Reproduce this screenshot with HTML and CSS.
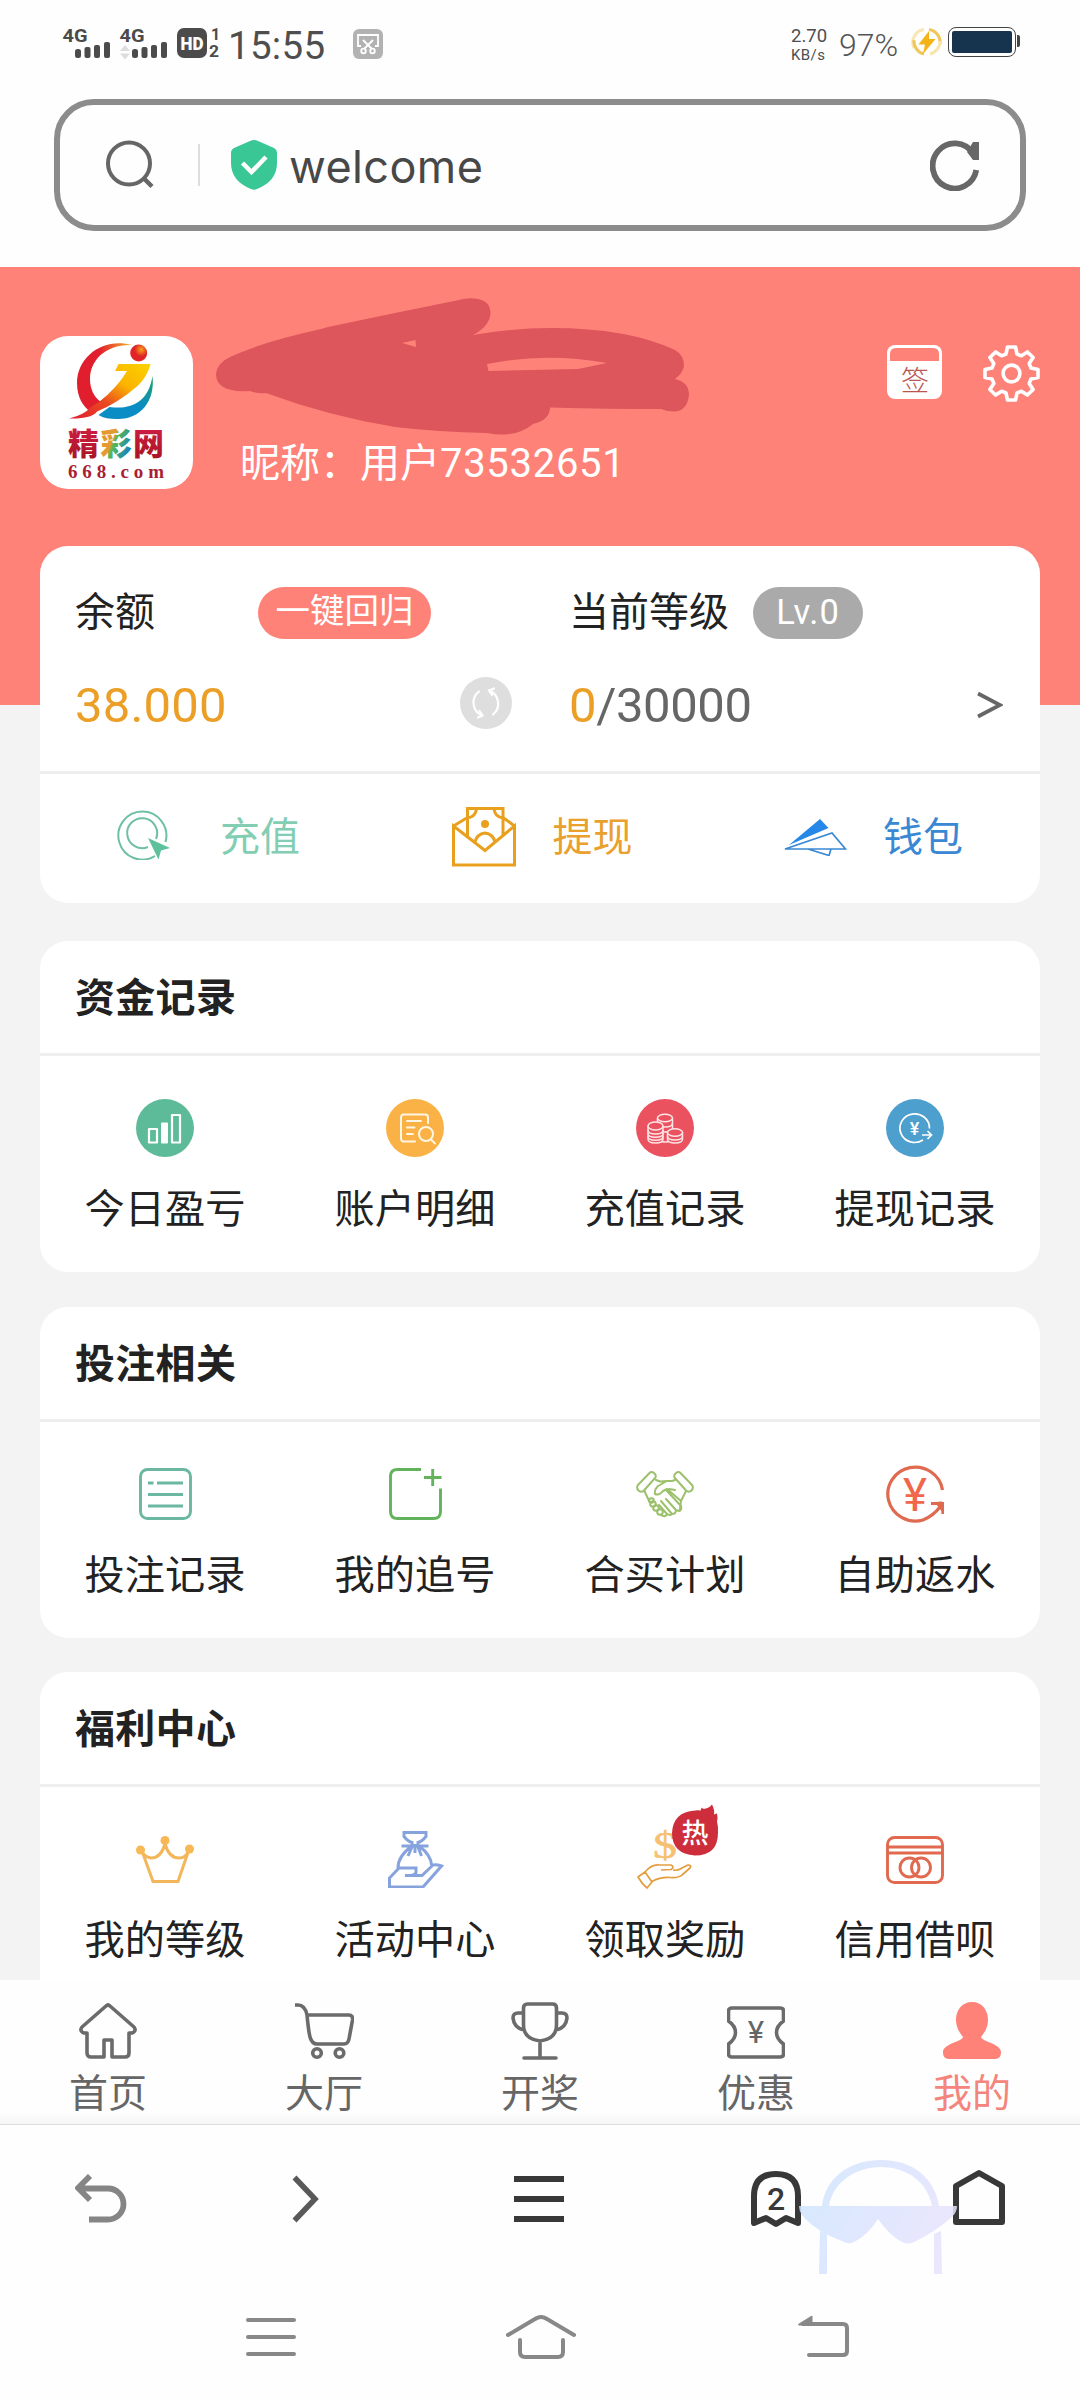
FILE: index.html
```html
<!DOCTYPE html>
<html lang="zh-CN">
<head>
<meta charset="utf-8">
<title>我的</title>
<link rel="stylesheet" href="styles.css">
</head>
<body>
<header class="status">
  <svg class="signals" viewBox="60 24 162 38" width="162" height="38">
    <g fill="#4b4b4b">
      <g class="net"><text x="62.500" y="42" textLength="25" lengthAdjust="spacingAndGlyphs">4G</text><text x="119.500" y="42" textLength="25" lengthAdjust="spacingAndGlyphs">4G</text></g>
      <rect x="75" y="49" width="6" height="9" rx="2.500"/><rect x="84.500" y="47" width="6" height="11" rx="2"/><rect x="94" y="45" width="6" height="13" rx="2"/><rect x="104" y="42" width="6" height="16" rx="2"/>
      <rect x="132" y="49" width="6" height="9" rx="2.500"/><rect x="141.500" y="47" width="6" height="11" rx="2"/><rect x="151" y="45" width="6" height="13" rx="2"/><rect x="161" y="42" width="6" height="16" rx="2"/>
      <rect x="177" y="28" width="30" height="30" rx="7"/>
      <g class="sim"><text x="211" y="40">1</text><text x="209" y="57" textLength="10" lengthAdjust="spacingAndGlyphs">2</text></g>
    </g>
    <path d="M120 51l5-6 5 6zM120 53.500l5 6 5-6z" fill="#ddd"/>
    <text class="hd" x="180.500" y="50" textLength="23" lengthAdjust="spacingAndGlyphs">HD</text>
  </svg>
  <span class="clock">15:55</span>
  <svg class="snip" viewBox="0 0 30 30" width="30" height="30">
    <rect width="30" height="30" rx="6" fill="#b2b2b2"/>
    <g fill="none" stroke="#fff" stroke-width="1.800"><path d="M8 17H5V6h20v11h-3M10 11l9 9M20 11l-9 9"/><circle cx="10.500" cy="22" r="2.300"/><circle cx="19.500" cy="22" r="2.300"/></g>
  </svg>
  <div class="speed"><span>2.70</span><span>KB/s</span></div>
  <span class="percent">97%</span>
  <svg class="charge" viewBox="0 0 32 30" width="32" height="30">
    <g fill="none" stroke-width="3"><path d="M13 2.500A13 13 0 0 0 3 21" stroke="#f8e7b4"/><path d="M3 13a13 13 0 0 0 10 14" stroke="#efc75a"/><path d="M18 2.500A13 13 0 0 1 29 17" stroke="#f0c65b"/><path d="M29 14a13 13 0 0 1-10 13" stroke="#f8e5ae"/></g>
    <path d="M18 4L7.500 17.500h6.500L12 27l12.500-15H18z" fill="#f5b317"/>
  </svg>
  <div class="battery"><i></i></div>
</header>

<div class="address">
  <svg viewBox="0 0 48 50" width="48" height="50" fill="none" stroke="#666" stroke-width="4"><circle cx="23" cy="23.500" r="21"/><path d="M37.500 38l8.500 8.500" stroke-width="4.500"/></svg>
  <i class="sep"></i>
  <svg viewBox="0 0 46 50" width="46" height="50"><path d="M23 0q2 0 4 1l16 7q3 1.500 3 5v10q0 18-20 26-3 1.300-6 0Q0 41 0 23V13q0-3.500 3-5l16-7q2-1 4-1z" fill="#38c795"/><path d="M11.500 23l9 9L35 17" fill="none" stroke="#fff" stroke-width="4.500"/></svg>
  <span class="url">welcome</span>
  <svg class="reload" viewBox="0 0 50 51" width="50" height="51"><path d="M43 13.500A22 22.500 0 1 0 46.300 30" fill="none" stroke="#676767" stroke-width="5.800"/><path d="M43 2h6v18h-6l-6-8z" fill="#676767"/></svg>
</div>

<main class="page">
  <section class="profile">
    <svg class="avatar" viewBox="40 336 153 153" width="153" height="153">
      <defs>
        <linearGradient id="seven" x1="1" y1="0" x2="0" y2="1"><stop offset="0" stop-color="#fbd200"/><stop offset=".35" stop-color="#fbb400"/><stop offset=".62" stop-color="#ea4a20"/><stop offset="1" stop-color="#e01e30"/></linearGradient>
        <linearGradient id="arc" x1="1" y1="0" x2="0" y2="0"><stop offset="0" stop-color="#f6b52a"/><stop offset=".6" stop-color="#e01e2d"/></linearGradient>
        <linearGradient id="sea" x1="1" y1="0" x2=".6" y2="1"><stop offset="0" stop-color="#1da36a"/><stop offset=".7" stop-color="#0a8cc4"/></linearGradient>
        <radialGradient id="head" cx=".65" cy=".3"><stop offset="0" stop-color="#f6a11c"/><stop offset=".8" stop-color="#df2327"/></radialGradient>
        <linearGradient id="name" x1="0" y1="0" x2="0" y2="1"><stop offset="0" stop-color="#d91f4c"/><stop offset="1" stop-color="#a31420"/></linearGradient>
        <linearGradient id="cai" x1="0" y1="0" x2="1" y2=".6"><stop offset=".5" stop-color="#e39a32"/><stop offset=".56" stop-color="#5cb84f"/><stop offset="1" stop-color="#1784c0"/></linearGradient>
      </defs>
      <rect x="40" y="336" width="153" height="153" rx="28" fill="#fff"/>
      <path d="M132 345C104 337 77 356 77 383 77 397 83 407 91 412L101 402C94 397 90 389 90 379 90 360 106 344 132 345z" fill="url(#arc)"/>
      <path d="M118.500 364H150.600Q147 377 138 385.500 118 403 97 411.500 92 419 69 418.500 84 415 91 407L99 402Q117 388 127 371H115z" fill="url(#seven)"/>
      <circle cx="138.700" cy="353" r="8.500" fill="url(#head)"/>
      <path d="M152.500 376c3 26-13 44-36 43-7 0-13-1-18-4l11-8c22 3 39-5 43-31z" fill="url(#sea)"/>
      <g class="brand"><text x="68" y="454.500" fill="url(#name)">精</text><text x="100.500" y="454.500" fill="url(#cai)">彩</text><text x="133" y="454.500" fill="url(#name)">网</text></g>
      <text class="domain" x="68" y="477.500" textLength="96">668.com</text>
    </svg>
    <p class="nick">昵称：用户<span>73532651</span></p>
    <svg class="scribble" viewBox="210 295 485 145" width="485" height="145"><path fill="#dc565b" fill-rule="evenodd" d="M216 374Q217 363 230 357Q262 342 321 329L328 327L395 313L459 300Q468 297 478 299Q490 301 490.500 313Q490 326 473 335Q512 328 551 328Q628 328 675 350Q684 355 684 366Q683 373 675 379Q689 382 689 395Q687 412 673 411.500Q666 411 661 409Q610 409 550 407.500Q550 420 533 424Q521 434 505 434.500Q497 435 487 433Q438 432 395 427Q328 416 266 393Q258 394 250 391Q216 393 216 374ZM402 343L415.500 340 416 347ZM487 364Q545 352 607 363L578 369 488.500 371Z"/></svg>
    <div class="tools">
      <svg viewBox="0 0 55 54" width="55" height="54"><rect width="55" height="54" rx="8" fill="#fff"/><path d="M3 16V9q0-6 6-6h37q6 0 6 6v7z" fill="#ff8279"/><text class="sign" x="14" y="46">签</text></svg>
      <svg viewBox="-28.500 -28.500 57 57" width="57" height="57" fill="none" stroke="#fff" stroke-width="3.600" stroke-linejoin="round"><path d="M-5.500-19.500L-4-26.500H4L5.500-19.500 9.900-17.700 15.900-21.600 21.600-15.900 17.700-9.900 19.500-5.500 26.500-4V4L19.500 5.500 17.700 9.900 21.600 15.900 15.900 21.600 9.900 17.700 5.500 19.500 4 26.500H-4L-5.500 19.500-9.900 17.700-15.900 21.600-21.600 15.900-17.700 9.900-19.500 5.500-26.500 4V-4L-19.500-5.500-17.700-9.900-21.600-15.900-15.900-21.600-9.900-17.700z"/><circle r="8.400"/></svg>
    </div>
  </section>

  <section class="card wallet">
    <div class="summary">
      <div class="half balance">
        <div class="line"><span class="label">余额</span><span class="pill back">一键回归</span></div>
        <div class="line second"><span class="num gold">38.000</span>
          <svg class="refresh" viewBox="0 0 52 52" width="52" height="52"><circle cx="26" cy="26" r="26" fill="#dedede"/><g fill="none" stroke="#fff" stroke-width="2.200" stroke-linecap="round"><path d="M19 14.500A14 14 0 0 0 22 38.500M18 40.500l4.500-2-3-4.500M33 37.500A14 14 0 0 0 29 13.500M34 11.500l-5 2 3 4.500"/></g></svg>
        </div>
      </div>
      <div class="half level">
        <div class="line"><span class="label">当前等级</span><span class="pill lv">Lv.0</span></div>
        <div class="line second"><span class="num"><b>0</b>/30000</span><svg class="more" viewBox="0 0 26 28" width="26" height="28" fill="none" stroke="#666" stroke-width="3.800"><path d="M1 2.500L23 14 1 25.500"/></svg></div>
      </div>
    </div>
    <div class="actions">
      <a class="green"><svg viewBox="0 0 54 51" width="54" height="51"><g fill="none" stroke="#6fbfa5" stroke-width="2"><path d="M48.500 33A24 24 0 1 0 38 47"/><path d="M39 30A15 15 0 1 0 31 38"/></g><path d="M31 29l22 10-9 2.500-2.500 9z" fill="#5fc09c"/></svg><span>充值</span></a>
      <a class="amber"><svg viewBox="0 0 64 60" width="64" height="60" fill="none" stroke="#e9a01f" stroke-width="3"><path d="M1.500 19L33 43.500 62.500 19V58H1.500zL15.500 10.500M51 10.500L62.500 19M15.500 29V1.500H51V29M15.500 11q8-1 9-9M51 11q-8-1-9-9M23 35q2-8 10-9 8 1 10 9"/><circle cx="33" cy="17" r="4" fill="#e9a01f" stroke="none"/></svg><span>提现</span></a>
      <a class="blue"><svg viewBox="0 0 63 38" width="63" height="38"><path d="M36 1l8.500 9L5 27z" fill="#2587e8"/><path d="M1 31l47-16 13.500 16zM24 31l21 6.500 2-6.500" fill="none" stroke="#3a88d4" stroke-width="1.700"/></svg><span>钱包</span></a>
    </div>
  </section>

  <section class="card group">
    <h2>资金记录</h2>
    <div class="grid">
      <a><svg viewBox="0 0 58 58" width="58" height="58"><circle cx="29" cy="29" r="29" fill="#5dbb99"/><g fill="none" stroke="#fff" stroke-width="2.200" stroke-linejoin="round"><rect x="13" y="30" width="8" height="13.500"/><rect x="36" y="16" width="8" height="27.500"/></g><rect x="25" y="23.500" width="7" height="21" rx="1" fill="#fff"/></svg>今日盈亏</a>
      <a><svg viewBox="0 0 58 58" width="58" height="58"><circle cx="29" cy="29" r="29" fill="#fab146"/><g fill="none" stroke="#fff6e4" stroke-width="2" stroke-linecap="round"><path d="M29 42.500H18q-3 0-3-3V18.500q0-3 3-3h21q3 0 3 3V24M21 22h14M21 28.500h7.500M21 35h6"/><circle cx="40" cy="35" r="7"/><path d="M45 40.500l4 4"/></g></svg>账户明细</a>
      <a><svg viewBox="0 0 58 58" width="58" height="58"><circle cx="29" cy="29" r="29" fill="#ea525f"/><g fill="#ea525f" stroke="#ffe5e7" stroke-width="1.500"><path d="M21.500 19v20q0 4 7.500 4t7.500-4V19"/><path d="M21.500 24q0 4 7.500 4t7.500-4m-15 5q0 4 7.500 4t7.500-4" fill="none"/><ellipse cx="29" cy="19" rx="7.500" ry="3.800"/><path d="M12 27v13q0 4 7.500 4t7.500-4V27"/><path d="M12 31q0 4 7.500 4t7.500-4m-15 3.200q0 4 7.500 4t7.500-4M12 37.300q0 4 7.500 4t7.500-4" fill="none"/><ellipse cx="19.500" cy="27" rx="7.500" ry="4"/><path d="M31.500 33v7q0 4 7.500 4t7.500-4v-7"/><path d="M31.500 37q0 4 7.500 4t7.500-4" fill="none"/><ellipse cx="39" cy="33.500" rx="7.500" ry="3.800"/></g></svg>充值记录</a>
      <a><svg viewBox="0 0 58 58" width="58" height="58"><circle cx="29" cy="29" r="29" fill="#4d9fcd"/><g fill="none" stroke="#fff" stroke-width="1.700"><path d="M43.500 29.500A14.800 14.300 0 1 0 37 41M36 36h9.500M41.500 32l4 4-4 4"/></g><text class="yen" x="28.500" y="35.500" font-size="18">¥</text></svg>提现记录</a>
    </div>
  </section>

  <section class="card group">
    <h2>投注相关</h2>
    <div class="grid">
      <a><svg viewBox="0 0 58 58" width="58" height="58" fill="none" stroke="#6cb7a1" stroke-width="2.900"><rect x="4.500" y="4.500" width="50" height="49" rx="7"/><path d="M12 18h5.500M21 18h26M12 29.500h35M12 41h35"/></svg>投注记录</a>
      <a><svg viewBox="0 0 58 58" width="58" height="58" fill="none" stroke="#63b35c" stroke-width="2.900"><path d="M35 4.500H11.500q-7 0-7 7v35q0 7 7 7h36q7 0 7-7V23.500M38 12.500h17.500M46.700 4v17"/></svg>我的追号</a>
      <a><svg viewBox="0 0 58 58" width="58" height="58" fill="none" stroke="#9cc06b" stroke-width="2" stroke-linejoin="round" stroke-linecap="round"><path d="M1.500 20.500L13.500 8q2-2 4.500 0t1.500 4.500L7.500 26q-3 1.500-5-.5t-1-5zM56.500 20.500L44.500 8q-2-2-4.500 0t-1.500 4.500L50.500 26q3 1.500 5-.5t1-5zM20 15l4 1.500 7-.5h5l3-1M8.500 26l5 11M50 26l-5 10-1 8M31 16l-9 5q-4 4-3 8 4 2 8-3l4-2 14 12M33 24l6 1M31 26l14 15q1 4-2 5l-3-1-10-11M40 45q0 4-4 4L25 36M36 49q-2 2-5 0l-8-9M31 49q-2 4-6 1"/><circle cx="17" cy="39" r="2.800"/><circle cx="20" cy="43" r="2.800"/><circle cx="24" cy="47" r="2.800"/><circle cx="15.500" cy="35.500" r="2.300"/></svg>合买计划</a>
      <a><svg viewBox="0 0 58 58" width="58" height="58" fill="none" stroke="#df6a4f" stroke-width="3.200"><path d="M56.500 25A27.500 27 0 1 0 37 55Q47 51 54 42M45 38.500h12V49M46 38.500q9 0 10.500-1"/><path d="M57 37v11l-4-5-3-4z" fill="#df6a4f" stroke="none"/><text class="yen rebate" x="29" y="45.500" font-size="46" textLength="24" lengthAdjust="spacingAndGlyphs">¥</text></svg>自助返水</a>
    </div>
  </section>

  <section class="card group">
    <h2>福利中心</h2>
    <div class="grid">
      <a><svg viewBox="0 0 58 58" width="58" height="58"><path d="M6 21l11 30.500h25L52.500 21Q50 28 43 28q-10 0-14-14-4 14-14 14Q8 27 6 21z" fill="none" stroke="#f3b65b" stroke-width="3"/><g fill="#f8b856"><circle cx="4.500" cy="20" r="4.500"/><circle cx="29" cy="10.500" r="4.500"/><circle cx="53.500" cy="19" r="4.500"/></g></svg>我的等级</a>
      <a><svg viewBox="0 0 58 58" width="58" height="58" fill="none" stroke="#86a3de" stroke-width="3"><path d="M18 2.500h22v4q-4 5-8 6v3h-6v-3q-4-1-8-6zM15.500 16h27M26 16q-14 10-14 22M33 16q12 9 12.500 19M26 17l-4 9M32 17l3.500 9M29 17v6M13 38h17v4q0 4-11 3.500h17L47 35q3-1 8.500 1L37 57H3.500V48z"/></svg>活动中心</a>
      <a class="hot"><svg class="gift" viewBox="0 0 58 58" width="58" height="58"><text class="dollar" x="17" y="28" textLength="24" lengthAdjust="spacingAndGlyphs">$</text><path d="M2 47L9 42l7 10-5 6q-5-4-9-11zM9 42q7-8 14-7h12q4 2 0 4.500l-10 .5M37 40q5 1 9-2l6-3q4 0 2 3l-8 7q-3 3-12 2.500-10-.5-18 4" fill="none" stroke="#e39d3d" stroke-width="1.700" stroke-linejoin="round"/></svg>
        <svg class="flame" viewBox="0 0 48 52" width="48" height="52"><path d="M24 5.500q3-.5 6 0-1-1 1-3 0 2 4 1 4-1 6-4 3 6 2 10 2-1 3-1 1 4 0 8 1.500 6 1 11Q47 50.500 24 50.500 1 49 1 28 2 7 24 5.500z" fill="#ce2e3b"/><text x="24" y="38">热</text></svg>领取奖励</a>
      <a><svg viewBox="0 0 58 58" width="58" height="58" fill="none" stroke="#e0694f" stroke-width="2.900"><rect x="1.500" y="7.500" width="55" height="45" rx="7"/><path d="M1 17h56M1 23h56"/><circle cx="23.500" cy="37.500" r="9.500"/><circle cx="35" cy="37.500" r="9.500"/></svg>信用借呗</a>
    </div>
  </section>
</main>

<nav class="tabs">
  <a><svg viewBox="0 0 58 58" width="58" height="58"><path d="M27 4q2-2 4 0L55 25q3 4-2 6H50V51q0 4-4 4H33V38H25V55H12q-4 0-4-4V31H5q-5-2-2-6z"/></svg>首页</a>
  <a><svg viewBox="0 0 60 58" width="60" height="58"><path d="M1 3h3c6 0 8 5 9 10H55q4 0 3.500 5L55 37q-1 5-5 5H23c-7 0-8-8-10-29"/><circle cx="23" cy="51" r="4.300"/><circle cx="45.500" cy="51" r="4.300"/></svg>大厅</a>
  <a><svg viewBox="0 0 58 58" width="58" height="58"><path d="M12.500 6q0-4 4-4h25q4 0 4 4v17q0 14-16.500 16Q12.500 37 12.500 23zM12 11H7q-5 0-5 5 1 10 11 12M46 11h5q5 0 5 5-1 10-11 12M29 39V56M13 56H45" stroke-linecap="round"/></svg>开奖</a>
  <a><svg viewBox="0 0 58 58" width="58" height="58"><path d="M5 6h48q3.500 0 3.500 3v10q-7 5-7 11.500t7 11.500V52q0 3-3.500 3H5q-3.500 0-3.500-3V42q7-5 7-11.500T1.500 19V9Q1.500 6 5 6z"/><text class="yen coupon" x="29" y="40.500" font-size="31">¥</text></svg>优惠</a>
  <a class="on"><svg class="person" viewBox="0 0 58 58" width="58" height="58"><path d="M29 0c10 0 16 8 16 18 0 7-3 12-7 17 0 4 20 7 20 15 0 6-3 7-7 7H7c-4 0-7-1-7-7 0-8 20-11 20-15-4-5-7-10-7-17C13 8 19 0 29 0z"/></svg>我的</a>
</nav>

<nav class="browser">
  <svg viewBox="0 0 54 50" width="54" height="50" fill="none" stroke="#858585" stroke-width="5.800"><path d="M15 2L3 14l12 12M3 14.500H33a15.200 15.200 0 0 1 0 31H14"/></svg>
  <svg viewBox="0 0 28 48" width="28" height="48" fill="none" stroke="#595959" stroke-width="5.500"><path d="M2.500 2.500L23 24 2.500 45.500"/></svg>
  <svg viewBox="0 0 50 46" width="50" height="46"><path d="M0 0h50v6H0zM0 20h50v6H0zM0 40h50v6H0z" fill="#383838"/></svg>
  <svg viewBox="0 0 52 58" width="52" height="58"><path d="M4 53V26Q4 4 26 4t22 22V53l-12-5-10 6-10-6z" fill="none" stroke="#383838" stroke-width="6" stroke-linejoin="round"/><text class="count" x="26" y="40">2</text></svg>
  <svg viewBox="0 0 52 57" width="52" height="57"><path d="M3 17L26 4l23 13V53H3z" fill="none" stroke="#383838" stroke-width="6" stroke-linejoin="round"/></svg>
  <svg class="glasses" viewBox="799 2160 158 114" width="158" height="114"><defs><linearGradient id="lens" x1="799" y1="2180" x2="957" y2="2250" gradientUnits="userSpaceOnUse"><stop offset="0" stop-color="#cfe6ff"/><stop offset="1" stop-color="#e9e2fd"/></linearGradient></defs><g fill="url(#lens)"><path d="M799 2206H957Q957 2212 952 2217Q935 2232 914 2242Q908 2245 902 2242Q889 2235 878 2219Q867 2236 854 2242Q848 2245 842 2241Q815 2231 802 2215Q799 2211 799 2206Z"/><path d="M820 2231l7 3v40h-8zM934 2234l7-3 1 43h-8z"/><path d="M822 2206C825 2180 847 2160 881 2160S935 2180 939 2206H932C928 2182 906 2167 881 2167S833 2182 829 2206Z"/></g></svg>
</nav>

<nav class="system">
  <svg viewBox="0 0 50 40" width="50" height="40"><path d="M2 3h46M2 20h46M2 37h46"/></svg>
  <svg viewBox="0 0 70 44" width="70" height="44"><path d="M2 20L29 4q6-4 12 0L68 20M14 25V37q0 5 5 5H52q5 0 5-5V25"/></svg>
  <svg viewBox="0 0 52 42" width="52" height="42"><path d="M5 9H45q4 0 4 4V36q0 4-4 4H11"/><path d="M1 9L14 1v9H1z" fill="#888" stroke-width="1"/></svg>
</nav>
</body>
</html>
```
FILE: styles.css
```css
* { box-sizing: border-box; }
body {
  margin: 0;
  width: 1080px;
  height: 2400px;
  overflow: hidden;
  display: flex;
  flex-direction: column;
  background: #fefefe;
  color: #222;
  font-family: Roboto, "Noto Sans CJK SC", sans-serif;
}
svg { display: block; flex: none; }

/* status bar */
.status { height: 99px; display: flex; align-items: flex-start; padding: 24px 60px 0; color: #4e4e4e; }
.net { font: 700 19px Roboto, sans-serif; }
.sim { font: 700 16px Roboto, sans-serif; }
.hd { font: 900 18px Roboto, sans-serif; fill: #fff; }
.clock { font-size: 38.5px; line-height: 43px; margin-left: 6px; width: 125px; letter-spacing: .3px; }
.snip { margin-top: 5px; }
.speed { display: flex; flex-direction: column; margin: 1px 1px 0 auto; width: 38px; font-size: 18.5px; line-height: 22px; white-space: nowrap; }
.speed span:last-child { font-size: 15px; line-height: 16px; letter-spacing: .4px; }
.percent { width: 63px; margin-left: 9px; font-size: 32px; line-height: 42px; font-weight: 300; color: #555; }
.charge { margin: 3px 5px 0 9px; }
.battery { position: relative; width: 68px; height: 30px; margin: 3px 4px 0 0; border: 1.5px solid #444; border-radius: 8px; padding: 3px; }
.battery i { display: block; height: 100%; background: #17344f; border-radius: 2px; }
.battery::after { content: ""; position: absolute; right: -5px; top: 7px; width: 3px; height: 12px; background: #444; border-radius: 0 2px 2px 0; }

/* address bar */
.address { flex: none; height: 132px; margin: 0 54px 36px; padding: 0 40px 0 46px; border: 6px solid #8b8c8b; border-radius: 40px; display: flex; align-items: center; }
.sep { width: 2px; height: 42px; margin: 0 31px 0 44px; background: #ddd; }
.url { margin: 3px 0 0 12px; font: 45px/50px Inter, sans-serif; color: #484848; letter-spacing: .4px; }
.reload { margin-left: auto; }

/* scrolling page, cut off by the tab bar */
.page { flex: none; height: 1713px; overflow: hidden; padding: 0 40px; background: linear-gradient(#ff8279 438px, #f3f3f3 438px); }
.profile { position: relative; height: 279px; display: flex; padding-top: 69px; }
.nick { margin: 103px 0 0 47px; font-size: 40px; line-height: 50px; color: #fff; white-space: nowrap; font-weight: 400; }
.nick span { letter-spacing: .7px; }
.scribble { position: absolute; left: 170px; top: 28px; }
.tools { display: flex; gap: 41px; margin: 9px 0 0 auto; }
.sign { font-size: 28px; font-weight: 300; fill: #b8564f; }
.brand { font: 900 31px "Noto Sans CJK SC", sans-serif; }
.domain { font: 700 19px "Liberation Serif", serif; fill: #a91e31; }

.card { background: #fff; border-radius: 28px; }
.wallet { height: 357px; }
.summary { height: 228px; border-bottom: 3px solid #eee; display: flex; padding: 41px 37px 0 35px; }
.half { width: 494px; }
.level { width: auto; flex: 1; }
.line { display: flex; align-items: center; height: 52px; }
.second { margin-top: 38px; }
.label { font-size: 40px; line-height: 52px; }
.pill { height: 52px; border-radius: 26px; font-size: 34.5px; line-height: 49px; color: #fff; text-align: center; }
.back { width: 173px; margin-left: 103px; background: #ff8279; }
.lv { width: 110px; margin-left: 24px; background: #aaa; line-height: 51px; letter-spacing: 1px; }
.num { margin-top: 6px; font-size: 49px; line-height: 52px; color: #666; letter-spacing: -.4px; }
.num b, .gold { color: #ec9f26; font-weight: 400; }
.gold { letter-spacing: .2px; margin-top: 5px; }
.refresh { margin-left: 233px; }
.more { margin: 4px 0 0 auto; }
.actions { height: 129px; display: flex; align-items: center; justify-content: space-between; padding: 0 77px 4px; font-size: 40px; }
.actions a { display: flex; align-items: center; }
.actions span { margin-top: -6px; }
.green { color: #83cdb3; gap: 49px; }
.green svg { margin-top: -4px; }
.amber { color: #e9a02c; gap: 37px; }
.blue { color: #3a88d4; gap: 36px; }

.group { height: 331px; margin-top: 38px; }
.group + .group { margin-top: 34.5px; }
.group h2 { margin: 0; height: 115px; border-bottom: 3px solid #eee; padding-left: 35px; font-size: 40px; line-height: 116px; font-weight: 700; letter-spacing: .3px; }
.grid { display: grid; grid-template-columns: repeat(4, 1fr); padding-top: 43px; }
.grid a { position: relative; display: flex; flex-direction: column; align-items: center; gap: 26px; font-size: 40.2px; line-height: 53px; }
.yen { font-family: Roboto, sans-serif; font-weight: 500; text-anchor: middle; fill: #fff; stroke: none; }
.rebate { fill: #f1674a; font-weight: 400; }
.coupon { fill: #666; font-weight: 400; }
.gift { overflow: visible; }
.dollar { font: 38px "Liberation Serif", serif; fill: #f6c070; stroke: #f6c070; stroke-width: .5; }
.flame { position: absolute; left: 131px; top: -25px; overflow: visible; }
.flame text { font-size: 27px; font-weight: 500; text-anchor: middle; fill: #fff; }

/* site tabs */
.tabs { flex: none; height: 145px; display: grid; grid-template-columns: repeat(5, 1fr); padding-top: 22px; background: linear-gradient(#fefefe 132px, #f6f6f6 143px); border-bottom: 1px solid #ddd; }
.tabs a { display: flex; flex-direction: column; align-items: center; gap: 8px; font-size: 39px; line-height: 52px; color: #666; }
.tabs svg { fill: none; stroke: #6b6b6b; stroke-width: 3.6; stroke-linejoin: round; }
.tabs text.yen { stroke: none; fill: #666; }
.tabs .on { color: #f4857d; }
.tabs .person { fill: #ff8279; stroke: none; }

/* browser toolbar */
.browser { position: relative; flex: none; height: 155px; padding: 44px 75px 0 75px; display: flex; align-items: flex-start; }
.browser svg:nth-child(1) { margin: 5px 163px 0 0; }
.browser svg:nth-child(2) { margin: 6px 194px 0 0; }
.browser svg:nth-child(3) { margin: 7px 186px 0 0; }
.browser svg:nth-child(4) { margin: 1px 151px 0 0; }
.count { font: 500 32px Roboto, sans-serif; text-anchor: middle; fill: #383838; }
.browser .glasses { position: absolute; left: 799px; top: 35px; margin: 0; opacity: .85; }

/* system navigation */
.system { flex: 1; display: flex; padding: 37px 0 0 246px; }
.system svg { fill: none; stroke: #888; stroke-width: 4; stroke-linecap: round; stroke-linejoin: round; }
.system svg:nth-child(2) { margin: -2px 222px 0 210px; }
.system svg:nth-child(3) { margin-top: -2px; }
```
